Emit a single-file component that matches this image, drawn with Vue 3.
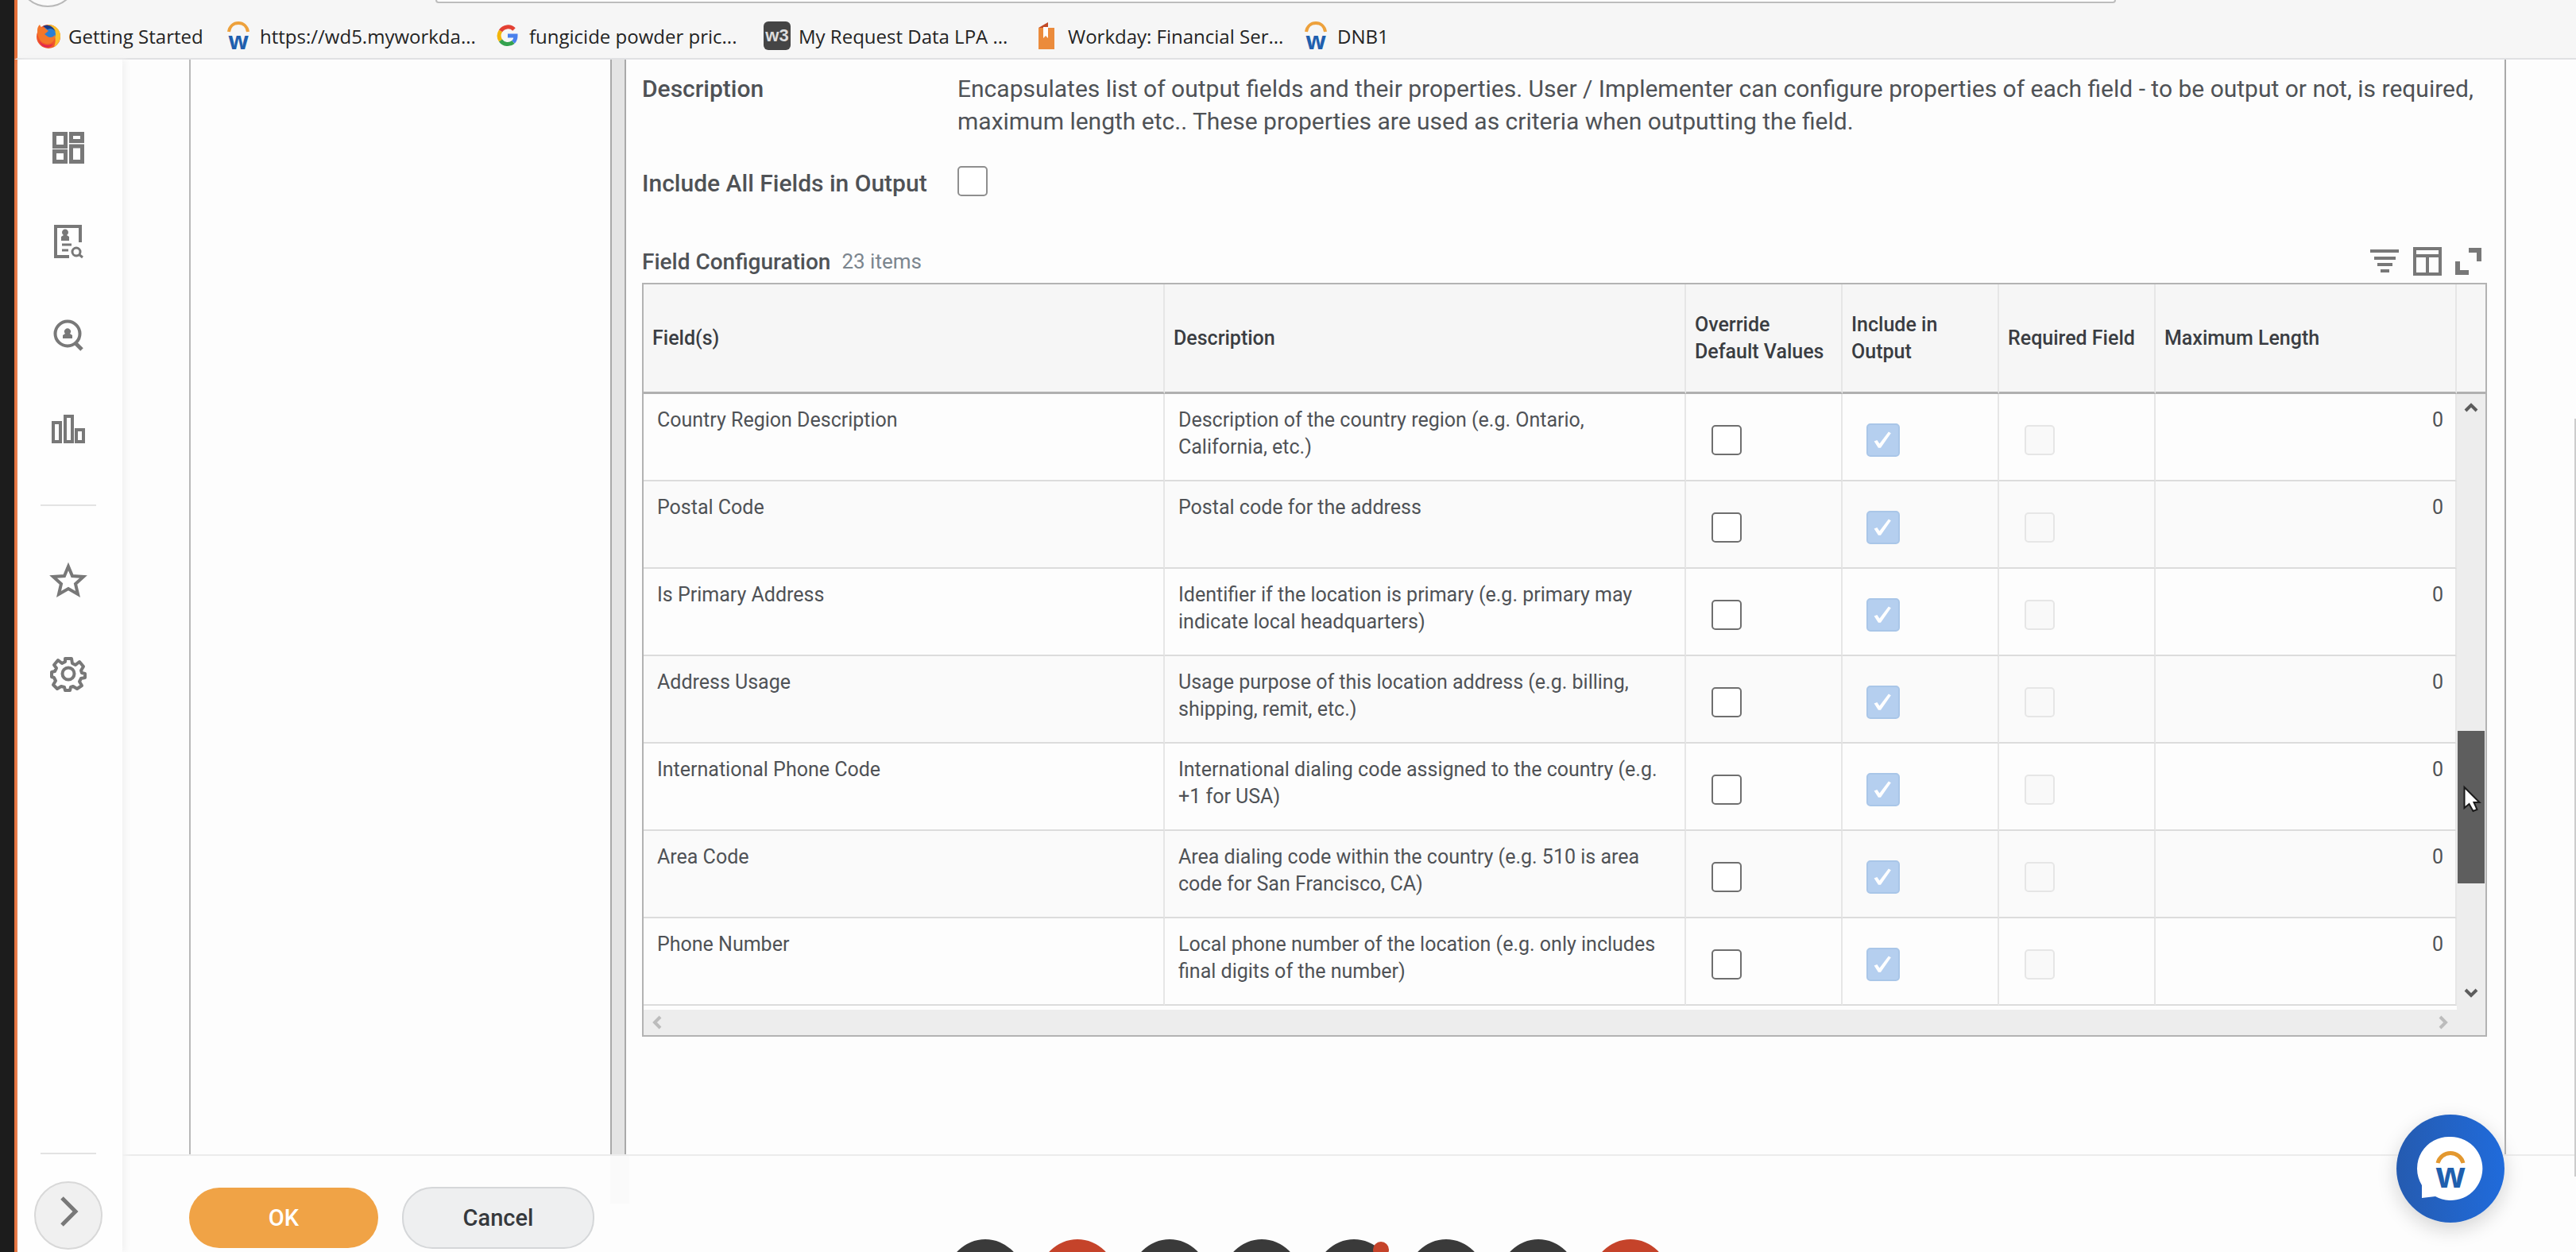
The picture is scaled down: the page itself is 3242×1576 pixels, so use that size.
<script setup>
const bookmarks = [
  { icon: 'firefox', label: 'Getting Started' },
  { icon: 'workday', label: 'https://wd5.myworkda...' },
  { icon: 'google', label: 'fungicide powder pric...' },
  { icon: 'w3', label: 'My Request Data LPA ...' },
  { icon: 'book', label: 'Workday: Financial Ser...' },
  { icon: 'workday', label: 'DNB1' },
]

const rows = [
  { name: 'Country Region Description', text: 'Description of the country region (e.g. Ontario, California, etc.)' },
  { name: 'Postal Code', text: 'Postal code for the address' },
  { name: 'Is Primary Address', text: 'Identifier if the location is primary (e.g. primary may indicate local headquarters)' },
  { name: 'Address Usage', text: 'Usage purpose of this location address (e.g. billing, shipping, remit, etc.)' },
  { name: 'International Phone Code', text: 'International dialing code assigned to the country (e.g. +1 for USA)' },
  { name: 'Area Code', text: 'Area dialing code within the country (e.g. 510 is area code for San Francisco, CA)' },
  { name: 'Phone Number', text: 'Local phone number of the location (e.g. only includes final digits of the number)' },
]

const dock = ['dark', 'red', 'dark', 'dark', 'dark badge', 'dark', 'dark', 'red']
</script>

<template>
  <div class="screen">
    <header class="toolbar">
      <span class="back-button"></span>
      <span class="url-box"></span>
      <nav class="bookmarks" aria-label="Bookmarks">
        <a v-for="b in bookmarks" :key="b.label" href="#" class="bookmark">
          <span class="favicon">
            <svg v-if="b.icon === 'firefox'" width="32" height="32" viewBox="0 0 32 32">
              <circle cx="16" cy="17" r="15" fill="#f0582b" />
              <path d="M15 2c9 0 16 6 16 14 0 6-3 11-8 14 4-9 1-20-8-28z" fill="#fbc02d" />
              <circle cx="16" cy="14" r="9" fill="#2a7fd4" />
              <path d="M2 9c0-3 1-5 3-7 1 3 3 4 6 4l5 4-5 4 4 3c3 2 7 1 9-2 1 8-5 12-11 11C6 25 2 18 2 9z" fill="#f4762a" />
              <path d="M9 4c7-3 13 0 16 7-3-4-7-5-10-3z" fill="#193b85" />
              <path d="M3 20c3 7 12 10 19 6-4 7-15 7-19-6z" fill="#e22850" />
            </svg>
            <svg v-else-if="b.icon === 'workday'" width="30" height="36" viewBox="0 0 30 36">
              <path d="M3 13C4 6 9 2 15 2s11 4 12 11" fill="none" stroke="#eda13c" stroke-width="4" />
              <text x="15" y="35" text-anchor="middle" class="logo-letter" font-size="30">w</text>
            </svg>
            <svg v-else-if="b.icon === 'google'" width="26" height="28" viewBox="0 0 26 28">
              <g fill="none" stroke-width="5">
                <path d="M21 6A11 11 0 0 0 4 8" stroke="#e34133" />
                <path d="M4 8a11 11 0 0 0 0 12" stroke="#f3b60b" />
                <path d="M4 20a11 11 0 0 0 16 2" stroke="#34a24f" />
                <path d="M20 22c2-2 3-5 3-8H13" stroke="#4a80ec" />
              </g>
            </svg>
            <span v-else-if="b.icon === 'w3'" class="w3">w3</span>
            <svg v-else width="22" height="36" viewBox="0 0 22 36">
              <path d="M1 8 13 1v8H1z" fill="#c14a27" />
              <path d="M1 8h20v27H1z" fill="#eb8b3c" />
              <path d="M7 7h6v14l-3-3-3 3z" fill="#fff" />
            </svg>
          </span>
          <span>{{ b.label }}</span>
        </a>
      </nav>
    </header>

    <div class="body">
      <nav class="sidebar" aria-label="Main">
        <button class="side-item" aria-label="Dashboard">
          <svg width="40" height="40" viewBox="0 0 40 40">
            <path d="M2.5 2.5h14v16h-14zM2.5 24.500h14v13h-14zM23.500 2.500h14v9h-14zM23.500 18h14v19.500h-14z" />
          </svg>
        </button>
        <button class="side-item" aria-label="Directory">
          <svg width="38" height="44" viewBox="0 0 38 44">
            <path d="M20 41H3V3h31v20" stroke-width="4" />
            <circle cx="29" cy="35" r="5" stroke-width="3" />
            <path d="M32 38l5 4M11 26h12M11 33h8" stroke-width="3" />
            <path d="M10 21v-5l3-2a4 4 0 1 1 4 0l3 2v5z" class="solid" />
          </svg>
        </button>
        <button class="side-item" aria-label="Find people">
          <svg width="38" height="40" viewBox="0 0 38 40">
            <circle cx="18" cy="18" r="15.500" class="thin" />
            <path d="M28 30l8 8" />
            <path d="M12 24v-4l3-2a4 4 0 1 1 6 0l3 2v4z" class="solid" />
          </svg>
        </button>
        <button class="side-item" aria-label="Reports">
          <svg width="44" height="38" viewBox="0 0 44 38">
            <path d="M3 11h9v24H3zM18 3h9v32h-9zM32 20h9v15h-9z" class="thin" />
          </svg>
        </button>
        <hr class="side-rule upper" />
        <button class="side-item" aria-label="Favorites">
          <svg width="42" height="42" viewBox="0 0 42 42">
            <path d="M21 4l5 12 14 1-10 9 3 13-12-7-12 7 3-13-10-9 14-1z" class="thin" />
          </svg>
        </button>
        <button class="side-item" aria-label="Settings">
          <svg width="44" height="44" viewBox="0 0 44 44">
            <circle cx="22" cy="22" r="7.500" class="thin" />
            <path d="M18 3h8l1 6 4 2 5-4 5 6-3 5 1 3 4 1v5l-5 1-2 4 3 5-6 4-5-3-3 1-1 4h-6l-1-4-4-1-5 3-5-5 3-5-2-4-3-1v-6l4-1 2-4-3-4 5-6 5 4 4-2z" class="thin" stroke-linejoin="round" />
          </svg>
        </button>
        <div class="side-bottom">
          <hr class="side-rule" />
          <button class="expand" aria-label="Expand menu">
            <svg width="24" height="42" viewBox="0 0 24 42"><path d="M3 3l17 17L3 37" /></svg>
          </button>
        </div>
      </nav>

      <main class="main">
        <div class="workspace">
          <section class="left-pane"></section>
          <div class="splitter"></div>
          <section class="detail">
            <div class="field">
              <span class="label">Description</span>
              <p class="value">Encapsulates list of output fields and their properties. User / Implementer can configure properties of each field - to be output or not, is required, maximum length etc.. These properties are used as criteria when outputting the field.</p>
            </div>
            <div class="field include">
              <label class="label" for="include-all">Include All Fields in Output</label>
              <input id="include-all" type="checkbox" class="box" />
            </div>

            <div class="grid-title">
              <h2>Field Configuration</h2>
              <span class="count">23 items</span>
              <div class="tools">
                <button aria-label="Filter">
                  <svg width="38" height="32" viewBox="0 0 38 32"><path d="M1 3h36M6 12h27M10 20h19M14 28h11" /></svg>
                </button>
                <button aria-label="Columns">
                  <svg width="36" height="36" viewBox="0 0 36 36"><path d="M2 2h32v32H2zM2 11h32M18 11v23" /></svg>
                </button>
                <button aria-label="Full screen">
                  <svg width="34" height="36" viewBox="0 0 34 36"><path d="M17 4h13v14M3 18v14h14" class="heavy" /></svg>
                </button>
              </div>
            </div>

            <div class="grid">
              <div class="grid-main">
                <table>
                  <colgroup>
                    <col class="c-wide" /><col class="c-wide" /><col class="c-flag" /><col class="c-flag" /><col class="c-flag" /><col />
                  </colgroup>
                  <thead>
                    <tr>
                      <th>Field(s)</th>
                      <th>Description</th>
                      <th>Override Default Values</th>
                      <th>Include in Output</th>
                      <th>Required Field</th>
                      <th>Maximum Length</th>
                    </tr>
                  </thead>
                  <tbody>
                    <tr v-for="r in rows" :key="r.name">
                      <td>{{ r.name }}</td>
                      <td>{{ r.text }}</td>
                      <td class="flag"><input type="checkbox" class="box strong" :aria-label="'Override default values: ' + r.name" /></td>
                      <td class="flag"><input type="checkbox" class="box ticked" checked disabled :aria-label="'Include in output: ' + r.name" /></td>
                      <td class="flag"><input type="checkbox" class="box off" disabled :aria-label="'Required field: ' + r.name" /></td>
                      <td class="num">0</td>
                    </tr>
                  </tbody>
                </table>
                <div class="h-scroll">
                  <svg width="14" height="18" viewBox="0 0 14 18"><path d="M11 2L4 9l7 7" /></svg>
                  <svg width="14" height="18" viewBox="0 0 14 18"><path d="M3 2l7 7-7 7" /></svg>
                </div>
              </div>
              <div class="grid-side">
                <div class="corner"></div>
                <div class="v-scroll">
                  <svg width="18" height="14" viewBox="0 0 18 14"><path d="M2 11l7-7 7 7" /></svg>
                  <div class="thumb">
                    <svg class="cursor" width="22" height="34" viewBox="0 0 22 34">
                      <path d="M1.500 2v26l6-5 5 9 5-2-4-9h7z" />
                    </svg>
                  </div>
                  <svg class="down" width="18" height="14" viewBox="0 0 18 14"><path d="M2 3l7 7 7-7" /></svg>
                </div>
              </div>
            </div>
          </section>
          <div class="page-thumb"></div>
        </div>

        <footer class="actions">
          <button class="pill ok">OK</button>
          <button class="pill cancel">Cancel</button>
          <span class="splitter-end"></span>
        </footer>
      </main>
    </div>

    <button class="assistant" aria-label="Assistant">
      <svg width="136" height="136" viewBox="0 0 136 136">
        <defs>
          <linearGradient id="assist" x1="0" x2="1" y1="0" y2="0">
            <stop offset="0" stop-color="#255bb0" />
            <stop offset="1" stop-color="#206bdb" />
          </linearGradient>
        </defs>
        <circle cx="68" cy="68" r="68" fill="url(#assist)" />
        <path d="M68 28a40 40 0 1 1-19 75l-17 2V89A40 40 0 0 1 68 28z" fill="#fff" />
        <path d="M52 61a16.500 16.500 0 0 1 32 0" fill="none" stroke="#e3982f" stroke-width="5" />
        <text x="68" y="92" text-anchor="middle" class="logo-letter" font-size="44">w</text>
      </svg>
    </button>

    <div class="dock">
      <span v-for="(d, i) in dock" :key="i" class="dot" :class="d"></span>
    </div>
  </div>
</template>

<style>
body {
  background: #fdfdfd;
}
</style>

<style scoped>
* {
  box-sizing: border-box;
}

.screen {
  position: relative;
  display: flex;
  flex-direction: column;
  height: 100vh;
  overflow: hidden;
  border-left: 18px solid #1c1c1c;
  background: #fdfdfd;
  color: #4f5256;
  font-family: Roboto, sans-serif;
  font-size: 25px;
}

button {
  padding: 0;
  border: 0;
  background: none;
  font-family: inherit;
}

svg {
  display: block;
  overflow: visible;
}

.toolbar,
.body {
  border-left: 4px solid #e4703a;
}

.toolbar {
  position: relative;
  flex: none;
  height: 75px;
  overflow: hidden;
  background: #f6f6f6;
  border-bottom: 2px solid #e0e1e3;
}

.back-button {
  position: absolute;
  left: 0;
  bottom: 64px;
  width: 76px;
  height: 76px;
  border: 2px solid #b8b8b8;
  border-radius: 50%;
  background: #fafafa;
}

.url-box {
  position: absolute;
  left: 526px;
  right: 579px;
  bottom: 69px;
  height: 40px;
  border: 2px solid #bdbdbd;
  border-radius: 4px;
  background: #fff;
}

.bookmarks {
  display: flex;
  padding: 26px 0 0 22px;
}

.bookmark {
  display: flex;
  align-items: center;
  gap: 10px;
  flex: 0 0 339px;
  height: 38px;
  color: #232323;
  font-family: "Open Sans", sans-serif;
  font-size: 24px;
  text-decoration: none;
  white-space: nowrap;
}

.bookmark:first-child {
  flex-basis: 239px;
  gap: 8px;
}

.favicon {
  display: flex;
  flex: none;
  justify-content: center;
  width: 34px;
}

.logo-letter {
  font-family: "Open Sans", sans-serif;
  font-weight: 700;
  fill: #1f5fae;
}

.w3 {
  width: 34px;
  height: 36px;
  border-radius: 6px;
  background: #454545;
  color: #ddd;
  font-family: "Liberation Sans", sans-serif;
  font-size: 22px;
  font-weight: 700;
  line-height: 36px;
  text-align: center;
}

.body {
  display: flex;
  flex: 1;
  min-height: 0;
}

.sidebar {
  position: relative;
  display: flex;
  flex: none;
  flex-direction: column;
  align-items: center;
  width: 132px;
  padding: 52px 4px 3px 0;
  background: #fefefe;
  box-shadow: 4px 0 8px #f2f2f2;
}

.side-item {
  display: flex;
  flex: none;
  align-items: center;
  justify-content: center;
  width: 100%;
  height: 118px;
}

.sidebar svg {
  fill: none;
  stroke: #787878;
  stroke-width: 5;
}

.sidebar .thin {
  stroke-width: 4;
}

.sidebar .solid {
  fill: #787878;
  stroke: none;
}

.tools svg {
  fill: none;
  stroke: #787878;
  stroke-width: 4;
}

.tools .heavy {
  stroke-width: 6;
}

.side-rule {
  flex: none;
  width: 70px;
  height: 2px;
  margin: 0;
  border: 0;
  background: #e3e3e3;
}

.side-rule.upper {
  margin: 36px 0 34px;
}

.side-bottom {
  display: flex;
  flex-direction: column;
  align-items: center;
  gap: 34px;
  margin-top: auto;
}

.expand {
  display: flex;
  align-items: center;
  justify-content: center;
  width: 86px;
  height: 86px;
  padding: 0 0 8px 2px;
  border: 2px solid #d8d8d8;
  border-radius: 50%;
  background: #f0f0f0;
}

.main {
  display: flex;
  flex: 1;
  flex-direction: column;
  min-width: 0;
}

.workspace {
  position: relative;
  display: flex;
  flex: 1;
  min-height: 0;
  padding: 0 88px 0 84px;
}

.left-pane {
  flex: none;
  width: 530px;
  border-left: 2px solid #b9b9b9;
}

.splitter {
  flex: none;
  width: 20px;
  border: solid #a9a9a9;
  border-width: 0 2px;
  background: #e4e4e4;
}

.detail {
  flex: 1;
  min-width: 0;
  padding: 16px 22px 0 20px;
  border-right: 2px solid #a9a9a9;
}

.field {
  display: flex;
  align-items: flex-start;
  font-size: 30px;
  line-height: 41px;
}

.label {
  flex: none;
  width: 397px;
  font-weight: 500;
}

.value {
  margin: 0;
}

.include {
  align-items: center;
  margin-top: 36px;
}

.box {
  position: relative;
  display: block;
  flex: none;
  width: 38px;
  height: 38px;
  margin: 0;
  border: 2px solid #8f8f8f;
  border-radius: 5px;
  background: #fff;
  appearance: none;
}

.include .box {
  margin-bottom: 4px;
}

.box.strong {
  border-color: #6f6f6f;
}

.box.off {
  border-color: #e6e6e6;
  background: #f9f9f9;
}

.box.ticked {
  width: 42px;
  height: 42px;
  border: 2px solid #a9c6e8;
  background: #b5cfef;
}

.box.ticked::before {
  content: "";
  position: absolute;
  inset: 0;
  background: #fff;
  clip-path: polygon(20% 55%, 30% 51%, 38% 63%, 68% 24%, 76% 28%, 42% 77%, 34% 77%);
}

.grid-title {
  display: flex;
  align-items: center;
  height: 36px;
  margin-top: 60px;
}

h2 {
  margin: 0;
  font-size: 28px;
  font-weight: 500;
}

.count {
  margin-left: 14px;
  color: #7b858e;
  font-size: 26px;
}

.tools {
  display: flex;
  align-items: center;
  gap: 17px;
  margin-left: auto;
  padding-right: 6px;
}

.grid {
  display: flex;
  margin-top: 9px;
  border: 2px solid #b3b3b3;
}

.grid-main {
  flex: 1;
  min-width: 0;
}

table {
  width: 100%;
  table-layout: fixed;
  border-collapse: separate;
  border-spacing: 0;
  line-height: 34px;
}

.c-wide {
  width: 656px;
}

.c-flag {
  width: 197px;
}

th,
td {
  border-right: 2px solid #e6e6e6;
  text-align: left;
}

th {
  height: 138px;
  padding: 0 8px 0 11px;
  border-bottom: 3px solid #b0b0b0;
  background: #f6f6f6;
  color: #3a3d42;
  font-weight: 500;
}

td {
  height: 110px;
  padding: 16px 16px 0 17px;
  border-bottom: 2px solid #dcdcdc;
  vertical-align: top;
}

tbody tr:nth-child(even) {
  background: #fafafa;
}

.flag {
  padding: 0 0 0 32px;
  vertical-align: middle;
}

.flag:nth-child(4) {
  padding-left: 30px;
}

.flag .box {
  margin-top: 7px;
}

.num {
  padding-right: 15px;
  text-align: right;
}

.h-scroll {
  display: flex;
  align-items: center;
  justify-content: space-between;
  height: 32px;
  margin-top: 5px;
  padding: 0 10px;
  background: #ededed;
}

.h-scroll svg,
.v-scroll svg {
  fill: none;
  stroke: #bcbcbc;
  stroke-width: 4;
}

.grid-side {
  display: flex;
  flex: none;
  flex-direction: column;
  width: 36px;
}

.corner {
  height: 138px;
  border-bottom: 3px solid #b0b0b0;
  background: #f6f6f6;
}

.v-scroll {
  display: flex;
  flex: 1;
  flex-direction: column;
  align-items: center;
  padding: 10px 1px 46px;
  background: #ededed;
}

.v-scroll > svg {
  flex: none;
  stroke: #5c5c5c;
}

.thumb {
  position: relative;
  flex: none;
  width: 100%;
  height: 192px;
  margin-top: 400px;
  background: #5e5e5e;
}

.down {
  margin-top: auto;
}

.v-scroll .cursor {
  position: absolute;
  top: 69px;
  left: 7px;
  fill: #fff;
  stroke: #1a1a1a;
  stroke-width: 2;
}

.page-thumb {
  position: absolute;
  top: 452px;
  right: 0;
  bottom: -28px;
  width: 2px;
  background: #cdcdcd;
}

.actions {
  display: flex;
  flex: none;
  align-items: center;
  gap: 30px;
  height: 123px;
  padding: 34px 0 0 84px;
  border-top: 2px solid #ececec;
}

.pill {
  width: 238px;
  height: 76px;
  border-radius: 38px;
  font-size: 29px;
  font-weight: 500;
}

.ok {
  background: #f0a346;
  color: #fff;
}

.cancel {
  width: 242px;
  height: 78px;
  border: 2px solid #d5d7d9;
  background: #eeeff0;
  color: #36393d;
}

.splitter-end {
  align-self: flex-start;
  width: 24px;
  height: 60px;
  margin: -34px 0 0 -10px;
  background: #fafafa;
}

.assistant {
  position: absolute;
  right: 90px;
  bottom: 37px;
  border-radius: 50%;
  box-shadow: 0 8px 24px #d4d4d4;
}

.dock {
  position: absolute;
  top: calc(100% - 16px);
  left: 0;
  right: 0;
  display: flex;
  justify-content: center;
  gap: 20px;
  padding-left: 32px;
}

.dot {
  position: relative;
  width: 96px;
  height: 96px;
  border-radius: 50%;
  background: #3a3a3a;
}

.dot.red {
  background: #c5432a;
}

.dot.badge::after {
  content: "";
  position: absolute;
  top: 3px;
  right: 4px;
  width: 20px;
  height: 20px;
  border-radius: 50%;
  background: #c5432a;
}
</style>
